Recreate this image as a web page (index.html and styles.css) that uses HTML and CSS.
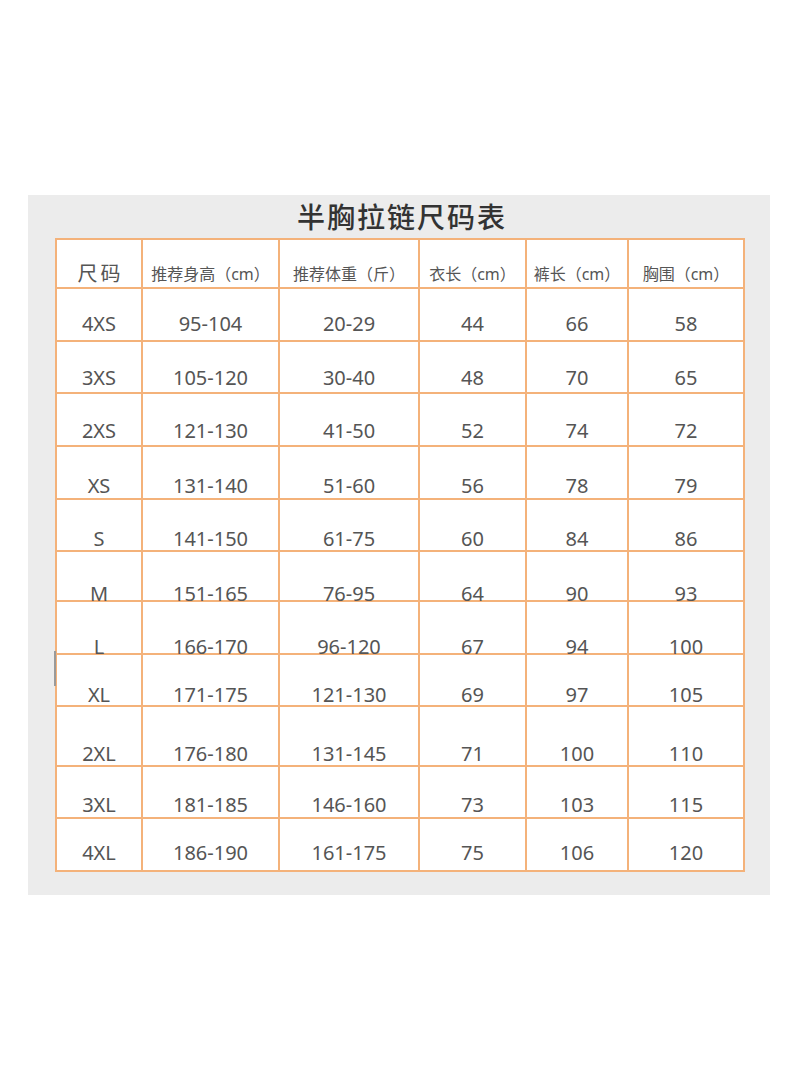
FILE: index.html
```html
<!DOCTYPE html>
<html lang="zh-CN">
<head>
<meta charset="utf-8">
<title>半胸拉链尺码表</title>
<link rel="stylesheet" href="styles.css">
</head>
<body>
<div class="panel">
  <div class="title">半胸拉链尺码表</div>
  <div class="table">
    <div class="row hdr">
      <div class="cell"><span class="big">尺码</span></div>
      <div class="cell"><span>推荐身高（cm）</span></div>
      <div class="cell"><span>推荐体重（斤）</span></div>
      <div class="cell"><span>衣长（cm）</span></div>
      <div class="cell"><span>裤长（cm）</span></div>
      <div class="cell"><span>胸围（cm）</span></div>
    </div>
    <div class="row r1"><div class="cell"><span>4XS</span></div><div class="cell"><span>95-104</span></div><div class="cell"><span>20-29</span></div><div class="cell"><span>44</span></div><div class="cell"><span>66</span></div><div class="cell"><span>58</span></div></div>
    <div class="row r2"><div class="cell"><span>3XS</span></div><div class="cell"><span>105-120</span></div><div class="cell"><span>30-40</span></div><div class="cell"><span>48</span></div><div class="cell"><span>70</span></div><div class="cell"><span>65</span></div></div>
    <div class="row r3"><div class="cell"><span>2XS</span></div><div class="cell"><span>121-130</span></div><div class="cell"><span>41-50</span></div><div class="cell"><span>52</span></div><div class="cell"><span>74</span></div><div class="cell"><span>72</span></div></div>
    <div class="row r4"><div class="cell"><span>XS</span></div><div class="cell"><span>131-140</span></div><div class="cell"><span>51-60</span></div><div class="cell"><span>56</span></div><div class="cell"><span>78</span></div><div class="cell"><span>79</span></div></div>
    <div class="row r5"><div class="cell"><span>S</span></div><div class="cell"><span>141-150</span></div><div class="cell"><span>61-75</span></div><div class="cell"><span>60</span></div><div class="cell"><span>84</span></div><div class="cell"><span>86</span></div></div>
    <div class="row r6"><div class="cell"><span>M</span></div><div class="cell"><span>151-165</span></div><div class="cell"><span>76-95</span></div><div class="cell"><span>64</span></div><div class="cell"><span>90</span></div><div class="cell"><span>93</span></div></div>
    <div class="row r7"><div class="cell"><span>L</span></div><div class="cell"><span>166-170</span></div><div class="cell"><span>96-120</span></div><div class="cell"><span>67</span></div><div class="cell"><span>94</span></div><div class="cell"><span>100</span></div></div>
    <div class="row r8"><div class="cell"><span>XL</span></div><div class="cell"><span>171-175</span></div><div class="cell"><span>121-130</span></div><div class="cell"><span>69</span></div><div class="cell"><span>97</span></div><div class="cell"><span>105</span></div></div>
    <div class="row r9"><div class="cell"><span>2XL</span></div><div class="cell"><span>176-180</span></div><div class="cell"><span>131-145</span></div><div class="cell"><span>71</span></div><div class="cell"><span>100</span></div><div class="cell"><span>110</span></div></div>
    <div class="row r10"><div class="cell"><span>3XL</span></div><div class="cell"><span>181-185</span></div><div class="cell"><span>146-160</span></div><div class="cell"><span>73</span></div><div class="cell"><span>103</span></div><div class="cell"><span>115</span></div></div>
    <div class="row r11"><div class="cell"><span>4XL</span></div><div class="cell"><span>186-190</span></div><div class="cell"><span>161-175</span></div><div class="cell"><span>75</span></div><div class="cell"><span>106</span></div><div class="cell"><span>120</span></div></div>
    <span class="mark"></span>
  </div>
</div>
</body>
</html>
```

FILE: styles.css
```css
* { box-sizing: border-box; }
html, body { margin: 0; padding: 0; background: #ffffff; }
body {
  width: 800px;
  height: 1091px;
  font-family: "Noto Sans", "Noto Sans CJK SC", sans-serif;
  color: #555555;
  padding-top: 195px;
}
.panel {
  margin-left: 28px;
  width: 742px;
  height: 700px;
  background: #ececec;
}
.title {
  height: 43px;
  line-height: 43px;
  text-align: center;
  font-family: "Noto Sans CJK SC", sans-serif;
  font-size: 28px;
  font-weight: 500;
  letter-spacing: 2px;
  color: #333333;
  padding-left: 6px;
}
.table {
  position: relative;
  margin-left: 27px;
  width: 690px;
  background: #ffffff;
  border-top: 2px solid #f4b27a;
  border-left: 2px solid #f4b27a;
  display: flex;
  flex-direction: column;
}
.row {
  display: grid;
  grid-template-columns: 86px 137px 140px 107px 102px 116px;
  --off: 14px;
}
.cell {
  border-right: 2px solid #f4b27a;
  border-bottom: 2px solid #f4b27a;
  display: flex;
  align-items: flex-end;
  justify-content: center;
}
.cell span {
  display: block;
  line-height: 24px;
  font-size: 20px;
  white-space: nowrap;
  margin-bottom: calc(var(--off) - 13px);
}
.hdr .cell span { font-size: 16px; letter-spacing: 0; }
.hdr .cell span.big { font-size: 20px; letter-spacing: 3px; margin-right: -3px; }

.hdr { height: 49px; --off: 14px; }
.r1 { height: 53px; --off: 17px; }
.r2 { height: 52px; --off: 15px; }
.r3 { height: 53px; --off: 15px; }
.r4 { height: 53px; --off: 13px; }
.r5 { height: 52px; --off: 12px; }
.r6 { height: 50px; --off: 7px; }
.r7 { height: 53px; --off: 7px; }
.r8 { height: 52px; --off: 11px; }
.r9 { height: 60px; --off: 12px; }
.r10 { height: 52px; --off: 13px; }
.r11 { height: 53px; --off: 18px; }

.mark {
  position: absolute;
  left: -3px;
  top: 411px;
  width: 2px;
  height: 35px;
  background: #9a9a9a;
}
```
